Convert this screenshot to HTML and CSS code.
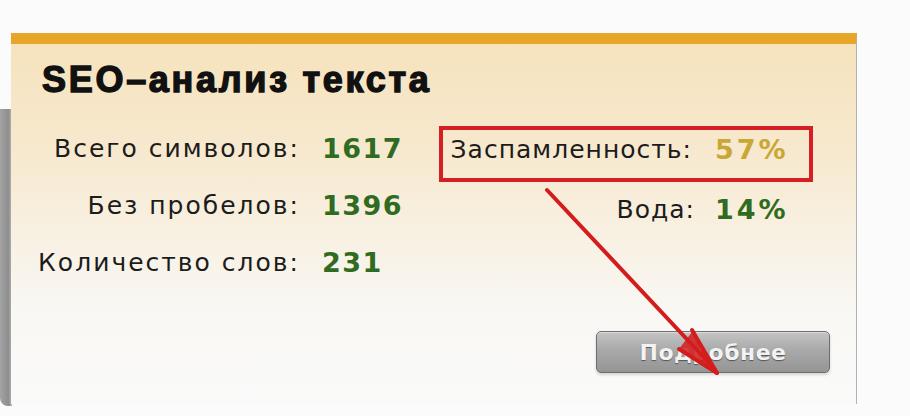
FILE: index.html
```html
<!DOCTYPE html>
<html lang="ru">
<head>
<meta charset="utf-8">
<title>SEO-анализ текста</title>
<link rel="stylesheet" href="styles.css">
</head>
<body>
<div class="page">
  <div class="strip"></div>
  <div class="card">
    <h1 class="title">SEO–анализ текста</h1>
    <div class="stats">
      <div class="col-left">
        <span class="label">Всего символов:</span><span class="value green">1617</span>
        <span class="label">Без пробелов:</span><span class="value green">1396</span>
        <span class="label">Количество слов:</span><span class="value green">231</span>
      </div>
      <div class="col-right">
        <div class="pair boxed"><span class="label">Заспамленность:</span><span class="value gold">57%</span></div>
        <div class="pair"><span class="label">Вода:</span><span class="value green">14%</span></div>
      </div>
    </div>
    <div class="actions">
      <button class="btn">Подробнее</button>
    </div>
  </div>
</div>
<svg class="arrow" width="910" height="416" viewBox="0 0 910 416">
  <line x1="547" y1="190" x2="712" y2="366" stroke="#d41c1c" stroke-width="4" stroke-linecap="round"/>
  <line x1="717" y1="373" x2="692" y2="330" stroke="#d41c1c" stroke-width="4" stroke-linecap="round"/>
  <line x1="717" y1="373" x2="679" y2="349" stroke="#d41c1c" stroke-width="4" stroke-linecap="round"/>
  <polygon points="717,373 692,332 679,349" fill="#d41c1c" opacity="0.85"/>
</svg>
</body>
</html>
```
FILE: styles.css
```css
html, body {
  margin: 0;
  padding: 0;
}
body {
  width: 910px;
  height: 416px;
  overflow: hidden;
  background: #fbfbfb;
  position: relative;
  font-family: "DejaVu Sans", Verdana, sans-serif;
}
.page {
  display: flex;
  padding-top: 33px;
}
.strip {
  width: 12px;
  height: 297px;
  margin-top: 76px;
  background: linear-gradient(to right, #a3a3a3, #8e8e8e 70%, #b8b8b8);
  border-bottom-left-radius: 8px;
}
.card {
  width: 845px;
  height: 360px;
  margin-left: -1px;
  border-top: 11px solid #e7a62a;
  border-right: 1px solid #b3b3b3;
  background: linear-gradient(to bottom, #f6e3bd 0%, #f7e9cf 30%, #f8f1e4 55%, #f9f8f4 75%, #fafafa 100%);
  display: flex;
  flex-direction: column;
}
.title {
  margin: 18px 0 0 31px;
  font-family: "Liberation Sans", Arial, sans-serif;
  font-weight: 700;
  font-size: 36px;
  line-height: 36px;
  letter-spacing: 2.7px;
  color: #111;
  -webkit-text-stroke: 1.4px #111;
}
.stats {
  display: flex;
  align-items: flex-start;
  margin-top: 22px;
  font-size: 25px;
}
.col-left {
  display: grid;
  grid-template-columns: 289px 110px;
  column-gap: 22px;
  line-height: 57px;
}
.label {
  justify-self: end;
  color: #1c1c1c;
  letter-spacing: 1px;
}
.col-left .label {
  letter-spacing: 2px;
}
.value {
  font-weight: 700;
  font-size: 27px;
  letter-spacing: 1.5px;
}
.green { color: #2f6b20; }
.gold { color: #c9a733; }
.col-right {
  margin-left: 7px;
  margin-top: 6px;
  display: flex;
  flex-direction: column;
  gap: 4px;
}
.pair {
  display: grid;
  grid-template-columns: 249px 100px;
  column-gap: 23px;
  width: 366px;
  line-height: 39px;
  border: 4px solid transparent;
  padding-bottom: 9px;
}
.pair.boxed {
  border-color: #d51f24;
}
.pair .value {
  letter-spacing: 3px;
}
.pair + .pair {
  padding-bottom: 0;
}
.pair + .pair .label {
  transform: translateX(3px);
}
.actions {
  display: flex;
  justify-content: flex-end;
  padding-right: 26px;
  margin-top: 40px;
}
.btn {
  width: 234px;
  height: 42px;
  border: 1px solid #6e6e6e;
  border-radius: 5px;
  background: linear-gradient(to bottom, #c4c4c4 0%, #a9a9a9 45%, #959595 100%);
  box-shadow: inset 0 1px 0 #dcdcdc, 0 2px 3px rgba(0,0,0,0.15);
  color: #f2f2f2;
  font-family: "DejaVu Sans", Verdana, sans-serif;
  font-size: 22px;
  font-weight: 700;
  letter-spacing: 0.5px;
  text-shadow: 0 1px 1px #555;
  padding: 0;
}
.arrow {
  position: absolute;
  left: 0;
  top: 0;
  pointer-events: none;
}
```
